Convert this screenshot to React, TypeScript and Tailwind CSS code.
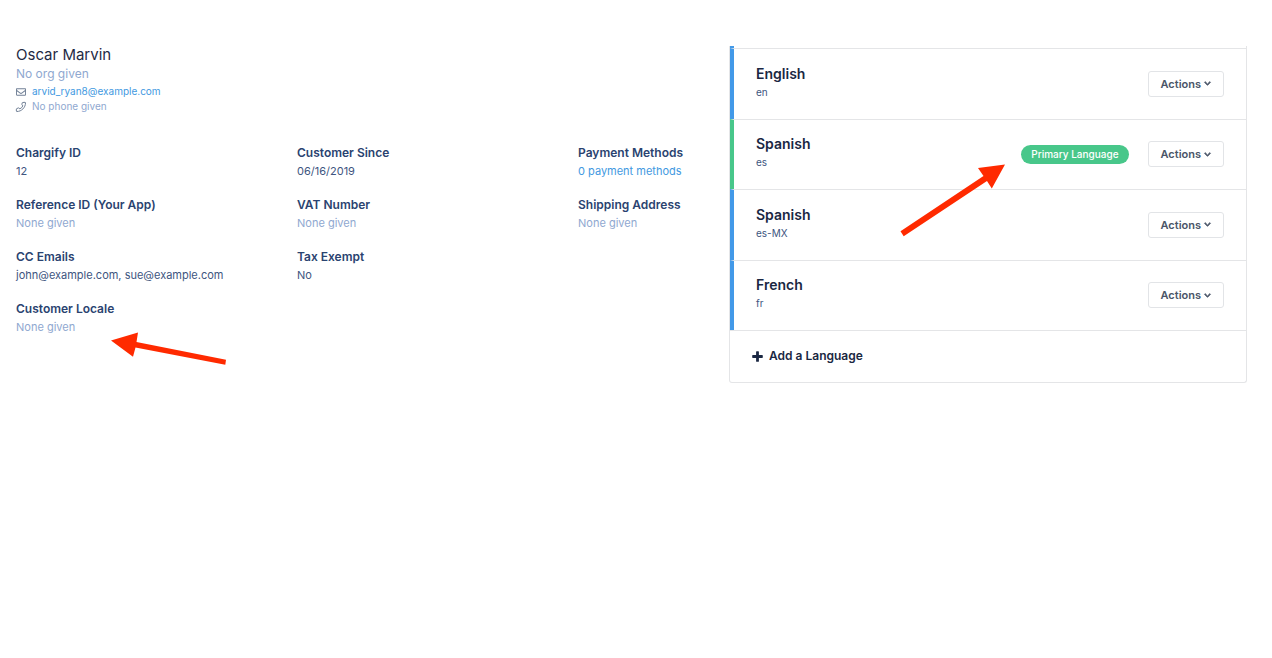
import React from 'react';
import { FaChevronDown, FaRegEnvelope } from 'react-icons/fa';

type Field = {
  label: string;
  value?: string;
  href?: string;
};

type Language = {
  name: string;
  code: string;
  primary?: boolean;
};

const columns: Field[][] = [
  [
    { label: 'Chargify ID', value: '12' },
    { label: 'Reference ID (Your App)' },
    { label: 'CC Emails', value: 'john@example.com, sue@example.com' },
    { label: 'Customer Locale' },
  ],
  [
    { label: 'Customer Since', value: '06/16/2019' },
    { label: 'VAT Number' },
    { label: 'Tax Exempt', value: 'No' },
  ],
  [
    { label: 'Payment Methods', value: '0 payment methods', href: '#payment-methods' },
    { label: 'Shipping Address' },
  ],
];

const languages: Language[] = [
  { name: 'English', code: 'en' },
  { name: 'Spanish', code: 'es', primary: true },
  { name: 'Spanish', code: 'es-MX' },
  { name: 'French', code: 'fr' },
];

const PhoneIcon = () => (
  <svg className="size-2.5 overflow-visible" viewBox="0 0 20 20" fill="none" stroke="#718096" strokeWidth="2" strokeLinejoin="round" aria-hidden="true">
    <path d="M13.2 1 18 0.6Q19 0.6 19 1.8C19 11 11 19 1.8 19Q0.7 19 0.7 18L0.8 14.2Q0.8 13.4 1.6 13.1L5 11.8Q5.9 11.5 6.4 12.2L7.6 13.8Q11.8 11.8 13.8 7.6L12.2 6.4Q11.5 5.9 11.8 5L12.4 1.8Q12.5 1.1 13.2 1Z" />
  </svg>
);

const PlusIcon = () => (
  <svg className="size-[11px]" viewBox="0 0 11 11" fill="currentColor" aria-hidden="true">
    <path d="M4.1 0.8Q4.1 0.2 4.7 0.2H6.3Q6.9 0.2 6.9 0.8V4.1H10.2Q10.8 4.1 10.8 4.7V6.3Q10.8 6.9 10.2 6.9H6.9V10.2Q6.9 10.8 6.3 10.8H4.7Q4.1 10.8 4.1 10.2V6.9H0.8Q0.2 6.9 0.2 6.3V4.7Q0.2 4.1 0.8 4.1H4.1Z" />
  </svg>
);

const FieldValue = ({ value, href }: Field) => {
  if (href) {
    return <a href={href} className="text-[#4299e1]">{value}</a>;
  }
  if (!value) {
    return <span className="text-[#8fa8d0]">None given</span>;
  }
  return <span className="text-[#405580]">{value}</span>;
};

const CustomerDetails = () => (
  <section className="min-w-0">
    <h1 className="text-[15px] leading-[18px] text-[#1f2a44]">Oscar Marvin</h1>
    <p className="text-xs leading-5 text-[#8fa8d0]">No org given</p>
    <p className="flex items-center gap-1.5 text-[10px] leading-[15px]">
      <FaRegEnvelope className="size-2.5 text-[#718096]" />
      <a href="mailto:arvid_ryan8@example.com" className="text-[#4299e1]">arvid_ryan8@example.com</a>
    </p>
    <p className="flex items-center gap-1.5 text-[10px] leading-[15px] text-[#8fa8d0]">
      <PhoneIcon />
      No phone given
    </p>

    <div className="mt-[30px] grid grid-cols-[281fr_281fr_151fr]">
      {columns.map((fields, i) => (
        <dl key={i} className="flex flex-col gap-4 leading-[18px]">
          {fields.map((field) => (
            <div key={field.label}>
              <dt className="text-xs leading-[18px] font-semibold text-[#2a4370]">{field.label}</dt>
              <dd className="text-[11px]"><FieldValue {...field} /></dd>
            </div>
          ))}
        </dl>
      ))}
    </div>
  </section>
);

const LanguageRow = ({ name, code, primary }: Language) => (
  <li
    className={`flex flex-1 items-center border-t border-t-[#e4e5e7] border-l-4 px-[22px] ${
      primary ? 'border-l-[#48c78a]' : 'border-l-[#4299e8]'
    }`}
  >
    <div className="pb-0.5">
      <h2 className="text-sm leading-[18px] font-semibold text-[#1a2742]">{name}</h2>
      <p className="text-[10px] leading-[18px] text-[#405580]">{code}</p>
    </div>
    <div className="ml-auto flex items-center gap-[19px]">
      {primary && (
        <span className="rounded-full bg-[#48c78a] px-2.5 text-[10px] leading-[19px] font-medium text-white">
          Primary Language
        </span>
      )}
      <button
        type="button"
        className="flex items-center gap-[3px] rounded-[3px] border border-[#e2e4e7] px-3 text-[11px] leading-6 font-semibold text-[#4a5568]"
      >
        Actions
        <FaChevronDown className="size-[7px] overflow-visible stroke-current stroke-[50]" />
      </button>
    </div>
  </li>
);

const LanguageList = () => (
  <section className="rounded-b-[3px] border border-t-0 border-[#e4e5e7]">
    <div className="h-0.5 border-l-4 border-[#4299e8]" />
    <ul className="flex min-h-[282px] flex-col">
      {languages.map((language) => (
        <LanguageRow key={language.code} {...language} />
      ))}
    </ul>
    <div className="border-t border-[#e4e5e7] px-[22px] pt-4 pb-[17px]">
      <button type="button" className="flex items-center gap-1.5 text-xs leading-[18px] font-semibold text-[#1a2742]">
        <PlusIcon />
        Add a Language
      </button>
    </div>
  </section>
);

const Arrows = () => (
  <>
    <svg className="pointer-events-none absolute top-[330px] left-[109px]" width="120" height="38" viewBox="109 330 120 38" aria-hidden="true">
      <path d="M111 340.5 138 332.5 136.5 342 226 359.7 225.3 364.8 135.5 347.4 133 356.7Z" fill="#ff2a00" />
    </svg>
    <svg className="pointer-events-none absolute top-[162px] right-[264px]" width="108" height="76" viewBox="900 162 108 76" aria-hidden="true">
      <path d="M1005 164.5 978 168 983.5 176 900.5 231.3 903.7 236.3 987 181 991.8 188.5Z" fill="#ff2a00" />
    </svg>
  </>
);

export default function App() {
  return (
    <main className="relative min-h-screen bg-white pt-[46px] pr-[25px] pl-4 font-[Inter,sans-serif]">
      <div className="grid grid-cols-[713fr_518fr] items-start">
        <CustomerDetails />
        <LanguageList />
      </div>
      <Arrows />
    </main>
  );
}
